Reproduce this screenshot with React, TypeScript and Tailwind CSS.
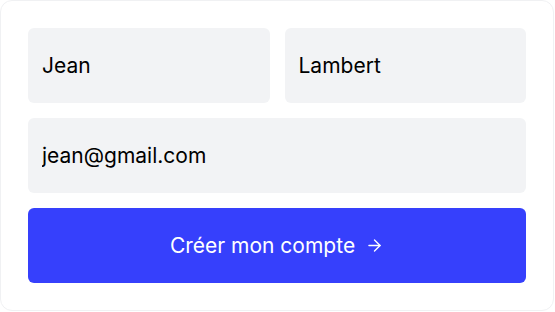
import { ArrowRight } from "lucide-react";

const fieldClass =
  "h-[75px] w-full rounded-md bg-[#f2f3f5] px-[14px] text-[21px] text-black outline-none";

export default function App() {
  return (
    <div className="h-[312px] w-[555px] bg-white font-['Inter',sans-serif]">
      <div className="h-[311px] w-[554px] rounded-xl border border-[#f0f1f3] bg-white px-[27px] pt-[27px]">
        <div className="flex flex-col gap-[15px]">
          <div className="grid grid-cols-2 gap-[15px]">
            <input className={fieldClass} defaultValue="Jean" />
            <input className={fieldClass} defaultValue="Lambert" />
          </div>
          <input className={fieldClass} defaultValue="jean@gmail.com" />
          <button className="flex h-[75px] w-full shrink-0 items-center justify-center gap-[10px] rounded-md bg-[#3640fc] text-[21px] text-white">
            Créer mon compte
            <ArrowRight className="h-[19px] w-[19px]" strokeWidth={1.75} />
          </button>
        </div>
      </div>
    </div>
  );
}
